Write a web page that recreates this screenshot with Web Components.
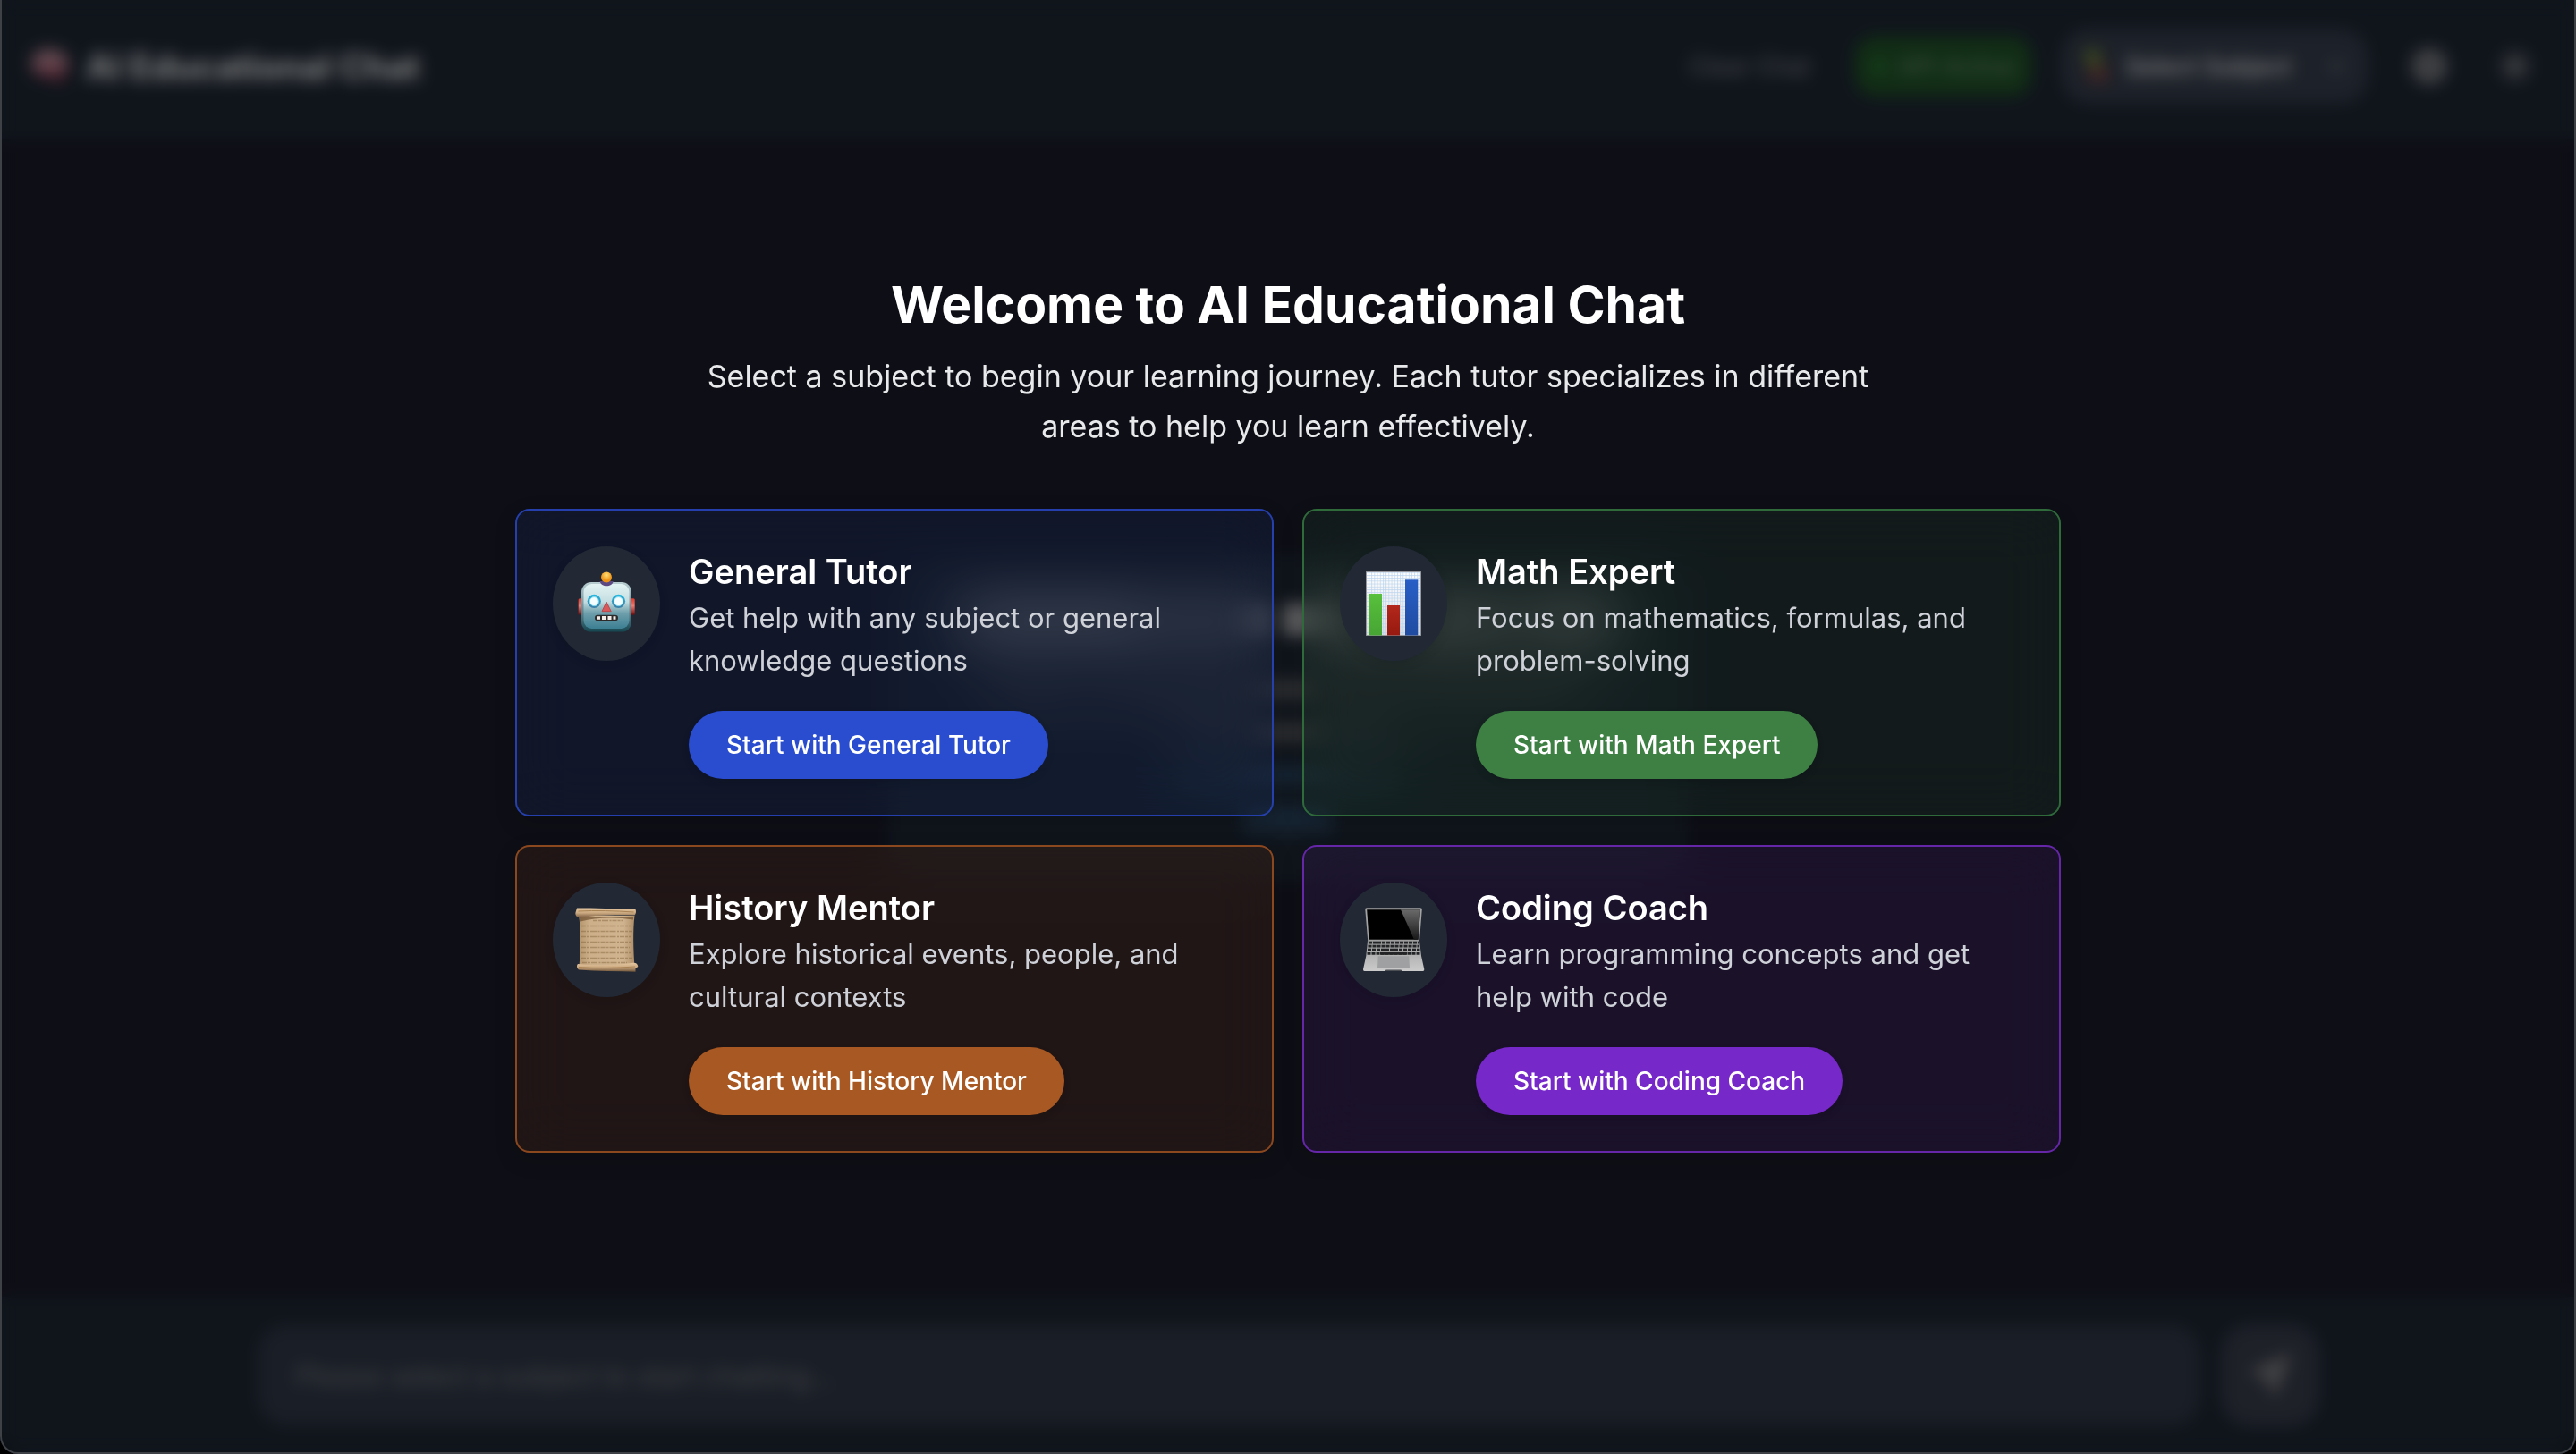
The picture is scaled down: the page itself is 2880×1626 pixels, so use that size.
<!DOCTYPE html>
<html lang="en">
<head>
<meta charset="utf-8">
<title>AI Educational Chat</title>
<style>
  html, body { margin: 0; height: 100%; background: #000; }
  body { font-family: Inter, "Open Sans", sans-serif; color: #fff; }
</style>
</head>
<body>
<edu-app></edu-app>

<template id="t-app">
  <style>
    :host { display: grid; height: 100vh; overflow: hidden; border-radius: 0 0 20px 20px; position: relative; background: #1c1c2c; }
    .page, .veil, edu-welcome, .frame { grid-area: 1 / 1; min-height: 0; }
    .page { display: flex; flex-direction: column; }
    main { flex: 1; display: flex; align-items: center; justify-content: center; }
    .veil { background: rgba(0, 0, 0, .5); backdrop-filter: blur(9px); z-index: 1; }
    edu-welcome { z-index: 2; }
    .frame { z-index: 3; pointer-events: none; border: 2px solid #3e4145; border-top: 0; border-radius: 0 0 20px 20px; }
  </style>
  <div class="page">
    <edu-header></edu-header>
    <main><edu-intro></edu-intro></main>
    <edu-composer></edu-composer>
  </div>
  <div class="veil"></div>
  <edu-welcome></edu-welcome>
  <div class="frame"></div>
</template>

<template id="t-header">
  <style>
    :host { display: flex; align-items: center; justify-content: space-between; height: 156px; padding: 0 32px 8px; background: #202a38; box-sizing: border-box; }
    .brand, .tools { display: flex; align-items: center; }
    .brand { gap: 16px; font-size: 39px; font-weight: 700; }
    .tools { gap: 24px; font-size: 27px; }
    button, select { font: inherit; color: inherit; background: none; border: 0; margin: 0; padding: 0; }
    .clear { color: #9a9da3; padding: 12px 24px; border: 2px solid #262d3a; border-radius: 24px; }
    .api { display: flex; gap: 12px; align-items: center; height: 68px; padding: 0 20px; border-radius: 24px; background: #235a2b; color: #79a67d; margin-right: 8px; }
    .api::before { content: ""; width: 16px; height: 16px; border-radius: 8px; background: #2f8a3a; }
    .pick { display: flex; gap: 16px; align-items: center; height: 84px; padding: 0 24px; border-radius: 32px; background: #3a4252; font-weight: 500; margin-right: 8px; }
    select { appearance: none; width: 208px; }
    .icon { width: 72px; height: 72px; display: grid; place-items: center; }
  </style>
  <div class="brand">
    <svg width="48" height="48" viewBox="0 0 48 48" aria-hidden="true"><path d="M4 26C0 14 10 5 20 5c12-2 24 5 25 17 1 8-4 10-9 11l2 10h-7l-4-8C16 38 6 36 4 26Z" fill="#c9909f"/><path d="M6 24c8 6 22 8 38 0-1 8-4 10-9 11l2 8h-6l-4-8C16 38 7 34 6 24Z" fill="#a8405c"/></svg>
    <span>AI Educational Chat</span>
  </div>
  <div class="tools">
    <button class="clear">Clear Chat</button>
    <span class="api">API Active</span>
    <label class="pick">
      <svg width="32" height="44" viewBox="0 0 32 44" aria-hidden="true"><path d="M2 4h18v18H6z" fill="#7d9a3c"/><path d="M8 22h20v17H8z" fill="#8a4a4a"/></svg>
      <select aria-label="Subject"><option>Select Subject</option></select>
      <svg width="24" height="24" viewBox="0 0 24 24" fill="none" stroke="#9a9ea6" stroke-width="3" aria-hidden="true"><path d="m5 8 7 8 7-8"/></svg>
    </label>
    <button class="icon" aria-label="Settings"><svg width="44" height="44" viewBox="0 0 44 44"><circle cx="22" cy="22" r="20" fill="#85878c"/><circle cx="22" cy="22" r="6" fill="#5b5f67"/></svg></button>
    <button class="icon" aria-label="Theme"><svg width="44" height="44" viewBox="0 0 44 44" stroke="#85878c" stroke-width="4"><circle cx="22" cy="22" r="9" fill="#6f7277"/><path d="M22 3v6M22 35v6M3 22h6M35 22h6M9 9l4 4M31 31l4 4M35 9l-4 4M13 31l-4 4"/></svg></button>
  </div>
</template>

<template id="t-intro">
  <style>
    :host { display: flex; flex-direction: column; align-items: center; width: 896px; padding: 56px; box-sizing: border-box; background: #202a38; border-radius: 32px; }
    .row { display: flex; gap: 16px; height: 24px; margin-bottom: 24px; }
    .row i { border-radius: 4px; background: #55585e; }
    .title { height: 36px; margin-bottom: 48px; }
    .title i { background: #b4b5b8; }
    .links { margin-bottom: 20px; }
    .links i, .action i { background: #2b4763; }
    .action { height: 32px; margin: 0; }
    .w1 { width: 48px; } .w2 { width: 100px; } .w3 { width: 216px; } .w4 { width: 256px; }
  </style>
  <div class="row title"><i class="w3"></i><i class="w1"></i><i class="w1"></i><i class="w4"></i><i class="w2"></i></div>
  <div class="row"><i class="w2"></i><i class="w4"></i><i class="w1"></i><i class="w3"></i></div>
  <div class="row"><i class="w1"></i><i class="w2"></i><i class="w1"></i></div>
  <div class="row links"><i class="w4"></i></div>
  <div class="row action"><i class="w2"></i></div>
</template>

<template id="t-composer">
  <style>
    :host { display: flex; justify-content: center; padding: 32px; background: #202a38; }
    form { display: flex; gap: 24px; width: 100%; max-width: 2304px; }
    input { flex: 1; min-width: 0; height: 112px; box-sizing: border-box; border: 0; border-radius: 32px; padding: 0 42px; background: #343c4c; color: #fff; font: 31px Inter, sans-serif; }
    input::placeholder { color: #7e818b; opacity: 1; }
    button { width: 108px; height: 112px; border: 0; border-radius: 32px; background: #3e4252; display: grid; place-items: center; padding: 0; }
  </style>
  <form>
    <input aria-label="Message" placeholder="Please select a subject to start chatting...">
    <button type="button" aria-label="Send"><svg width="56" height="56" viewBox="0 0 56 56"><path d="M4 24 52 3 33 53 24 32Z" fill="#85888c"/></svg></button>
  </form>
</template>

<template id="t-welcome">
  <style>
    :host { display: flex; flex-direction: column; align-items: center; justify-content: center; padding: 0 32px 32px; box-sizing: border-box; }
    h1 { margin: 0 0 16px; font-size: 57px; line-height: 72px; font-weight: 700; text-align: center; }
    p { margin: 0 0 64px; max-width: 1344px; font-size: 34px; line-height: 56px; color: #e8e9eb; text-align: center; }
    .grid { display: grid; grid-template-columns: 1fr 1fr; gap: 32px; width: 100%; max-width: 1728px; }
    tutor-card svg { display: block; width: 120px; height: 128px; }
  </style>
  <h1>Welcome to AI Educational Chat</h1>
  <p>Select a subject to begin your learning journey. Each tutor specializes in different areas to help you learn effectively.</p>
  <div class="grid">
    <tutor-card tone="blue" name="General Tutor">
      <svg slot="icon" viewBox="0 0 120 128" aria-hidden="true">
        <defs>
          <linearGradient id="rh" x2="0" y2="1"><stop stop-color="#e4f4f4"/><stop offset=".4" stop-color="#c4dde0"/><stop offset=".65" stop-color="#6f9fab"/><stop offset="1" stop-color="#3c7f93"/></linearGradient>
          <linearGradient id="rr" x2="0" y2="1"><stop stop-color="#b9ced0"/><stop offset=".5" stop-color="#6b929c"/><stop offset="1" stop-color="#164650"/></linearGradient>
          <linearGradient id="re" x2="0" y2="1"><stop stop-color="#e03a2c"/><stop offset=".45" stop-color="#ee7a70"/><stop offset="1" stop-color="#6e0d0d"/></linearGradient>
          <radialGradient id="rb" cy=".3"><stop stop-color="#ffe27a"/><stop offset="1" stop-color="#ee9417"/></radialGradient>
          <linearGradient id="ry" x2="0" y2="1"><stop stop-color="#25b9df"/><stop offset="1" stop-color="#3a7ea6"/></linearGradient>
        </defs>
        <rect x="28.700" y="58.300" width="5" height="18.400" rx="1.500" fill="url(#re)"/>
        <rect x="86.500" y="58.300" width="5.200" height="18.400" rx="1.500" fill="url(#re)"/>
        <rect x="32" y="40" width="56" height="55.600" rx="11" fill="url(#rr)"/>
        <rect x="34.500" y="42" width="51" height="50" rx="9" fill="url(#rh)"/>
        <path d="M52.700 39h15c-1 7-14 7-15 0Z" fill="#5d4a83"/>
        <circle cx="60" cy="34.500" r="6" fill="url(#rb)"/>
        <circle cx="46.300" cy="61.300" r="7.600" fill="url(#ry)"/><circle cx="46.300" cy="61.600" r="5" fill="#f4fdff" stroke="#8adcf0"/>
        <circle cx="73.500" cy="61.300" r="7.600" fill="url(#ry)"/><circle cx="73.500" cy="61.600" r="5" fill="#f4fdff" stroke="#8adcf0"/>
        <path d="m60 62.200 5.200 10.500H55Z" fill="#d9595a" stroke="#b9494c" stroke-linejoin="round"/>
        <rect x="47" y="76.700" width="26" height="6.600" rx="3.300" fill="#2d2a2b"/>
        <path d="M50 78.300h3v3.500h-3zM55 78h4v4h-4zM61.500 78h4v4h-4zM67.500 78.300h3v3.500h-3z" fill="#f5efe9"/>
      </svg>
      Get help with any subject or general knowledge questions
    </tutor-card>
    <tutor-card tone="green" name="Math Expert">
      <svg slot="icon" viewBox="0 0 120 128" aria-hidden="true">
        <defs>
          <pattern id="gp" width="3.200" height="3.200" patternUnits="userSpaceOnUse"><path d="M0 .500h3.200M.500 0v3.200" stroke="#b9d3ee" stroke-width=".7"/></pattern>
          <linearGradient id="gs" x2="0" y2="1"><stop stop-color="#fff"/><stop offset="1" stop-color="#dcdde2"/></linearGradient>
          <linearGradient id="gg" x2="0" y2="1"><stop stop-color="#58c03c"/><stop offset="1" stop-color="#47a534"/></linearGradient>
          <linearGradient id="gr" x2="0" y2="1"><stop stop-color="#b3271c"/><stop offset="1" stop-color="#96190f"/></linearGradient>
          <linearGradient id="gb" x2="0" y2="1"><stop stop-color="#285fc6"/><stop offset="1" stop-color="#204ba1"/></linearGradient>
        </defs>
        <path d="M29.500 28.500h61v71h-61z" fill="url(#gs)"/><path d="M29.500 28.500h61v71h-61z" fill="url(#gp)" stroke="#97989e"/>
        <path d="M33 53h14v46.500H33z" fill="url(#gg)"/><path d="M53 66h14v33.500H53z" fill="url(#gr)"/><path d="M73 37.300h14.300v62.200H73z" fill="url(#gb)"/>
      </svg>
      Focus on mathematics, formulas, and problem-solving
    </tutor-card>
    <tutor-card tone="orange" name="History Mentor">
      <svg slot="icon" viewBox="0 0 120 128" aria-hidden="true">
        <defs>
          <linearGradient id="sb"><stop stop-color="#b3946c"/><stop offset=".2" stop-color="#cdb08a"/><stop offset=".8" stop-color="#d0b48f"/><stop offset="1" stop-color="#ae8e68"/></linearGradient>
          <linearGradient id="sr" x2="0" y2="1"><stop stop-color="#e6c8a0"/><stop offset=".5" stop-color="#cba981"/><stop offset="1" stop-color="#71553a"/></linearGradient>
        </defs>
        <path d="M29 36 91.500 37C89.500 52 90 75 91.500 94L29.500 93C31.500 76 31.500 52 29 36Z" fill="url(#sb)"/>
        <path d="M31 43.500c18-5 40-5 59-2v-3H30Z" fill="#6f5030" opacity=".7"/>
        <path d="M45 42.500h34M32 48.500h56M32 54.500h57M32 60.500h56M32 66.500h56M32 72.500h54M32 78.500h56M32 84.500h57M33 89.500h50" stroke="#806139" stroke-width="1.600" stroke-dasharray="5 1 3 1 7 1.500 2 1" opacity=".45"/>
        <path d="M27 28.500c20 0 42 .5 65.500 1.500 1 2 .5 5-1 6.500-22-1-42-1-61.500 3-4-1-5-4-4.500-6Z" fill="url(#sr)"/>
        <path d="M28.500 32c20-1 40-.5 62 1" stroke="#a98354" fill="none"/>
        <path d="M28 91c20 2 40 1.500 60-1 4-1 7 0 7.300 4l-2.800 2v3.700c-20-.7-42-.7-63.500-2.200C26 95 27 92 28 91Z" fill="url(#sr)"/>
        <path d="M29 94.500c20 1.500 41 1 63-.5" stroke="#a98354" fill="none"/>
      </svg>
      Explore historical events, people, and cultural contexts
    </tutor-card>
    <tutor-card tone="purple" name="Coding Coach">
      <svg slot="icon" viewBox="0 0 120 128" aria-hidden="true">
        <defs>
          <linearGradient id="lg" x2="0" y2="1"><stop stop-color="#6a6a6a"/><stop offset="1" stop-color="#181818"/></linearGradient>
          <linearGradient id="lb" x2="0" y2="1"><stop stop-color="#8f8f90"/><stop offset=".5" stop-color="#b4b4b5"/><stop offset="1" stop-color="#cbcbcc"/></linearGradient>
        </defs>
        <path d="M30 28.300h60q2 0 1.800 2L89 65H31.200L28.300 30.300q-.2-2 1.700-2Z" fill="#a3a3a4"/>
        <path d="M30.200 30.200h59.800L87.500 63.800H32.500Z" fill="#000"/>
        <path d="M68 30.200h22L87.500 63.800H83Z" fill="url(#lg)"/>
        <path d="M31 64.700h58L91 82l3.300 15q.2 1.900-1.500 1.900H27.500q-1.700 0-1.500-1.900L29.300 82Z" fill="url(#lb)"/>
        <path d="M32 67.200h56M31.500 71.200h57M31 75.200h58.500M30.500 79.300h59.500" stroke="#222425" stroke-width="2.800" stroke-dasharray="4 1"/>
        <path d="M45 79.300h30" stroke="#222425" stroke-width="2.800"/>
        <path d="M42.700 82.300h34.600l.7 13.400H42Z" fill="#9fa0a1"/>
        <path d="M50 98.900q1-1.400 2.500-1.400h15q1.500 0 2.500 1.400Z" fill="#4b4e52"/>
      </svg>
      Learn programming concepts and get help with code
    </tutor-card>
  </div>
</template>

<template id="t-card">
  <style>
    :host { --fill: rgba(29, 54, 122, .2); --line: #2540ac; --btn: #2a4dd0;
      display: flex; align-items: flex-start; gap: 32px; padding: 40px; border: 2px solid var(--line); border-radius: 16px;
      background: var(--fill); backdrop-filter: blur(32px); box-shadow: 0 8px 24px rgba(0, 0, 0, .15); }
    :host([tone="green"]) { --fill: rgba(34, 74, 52, .2); --line: #2f6a3b; --btn: #3e8044; }
    :host([tone="orange"]) { --fill: rgba(109, 54, 27, .2); --line: #8b481f; --btn: #a85822; }
    :host([tone="purple"]) { --fill: rgba(79, 34, 127, .2); --line: #6526a8; --btn: #7628c8; }
    .disc { flex: none; width: 120px; height: 128px; border-radius: 50%; background: #222935; box-shadow: 0 4px 12px rgba(0, 0, 0, .12); }
    .text { flex: 1; min-width: 0; }
    h2 { margin: 0; font-size: 38px; line-height: 56px; font-weight: 600; }
    p { margin: 0 0 32px; max-width: 560px; font-size: 31px; line-height: 48px; color: #ced1d7; }
    button { display: block; height: 76px; padding: 0 42px; border: 0; border-radius: 38px; background: var(--btn); color: #fff; font: 500 28px Inter, sans-serif; box-shadow: 0 4px 8px rgba(0, 0, 0, .12); cursor: pointer; }
  </style>
  <div class="disc"><slot name="icon"></slot></div>
  <div class="text">
    <h2></h2>
    <p><slot></slot></p>
    <button type="button"></button>
  </div>
</template>

<script>
  class Base extends HTMLElement {
    constructor() {
      super();
      const t = document.getElementById(this.constructor.tpl);
      this.attachShadow({ mode: 'open' }).append(document.importNode(t.content, true));
    }
  }
  const make = (tag, tpl) => customElements.define(tag, class extends Base { static tpl = tpl; });

  customElements.define('tutor-card', class extends Base {
    static tpl = 't-card';
    connectedCallback() {
      const name = this.getAttribute('name');
      this.shadowRoot.querySelector('h2').textContent = name;
      this.shadowRoot.querySelector('button').textContent = 'Start with ' + name;
    }
  });
  make('edu-header', 't-header');
  make('edu-intro', 't-intro');
  make('edu-composer', 't-composer');
  make('edu-welcome', 't-welcome');
  make('edu-app', 't-app');
</script>
</body>
</html>
